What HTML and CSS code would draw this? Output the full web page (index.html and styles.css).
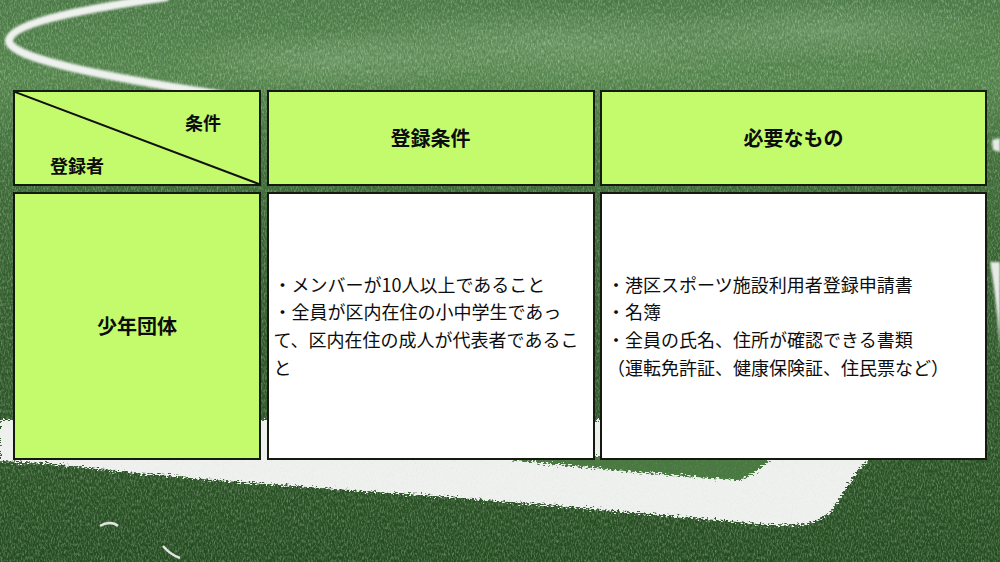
FILE: index.html
```html
<!DOCTYPE html>
<html lang="ja">
<head>
<meta charset="utf-8">
<title>登録条件</title>
<link rel="stylesheet" href="styles.css">
</head>
<body>
<div class="stage">
  <svg class="bg" width="1000" height="562" viewBox="0 0 1000 562" aria-hidden="true">
    <defs>
      <linearGradient id="base" x1="0" y1="0" x2="0" y2="1">
        <stop offset="0" stop-color="#4d7c47"/>
        <stop offset="0.14" stop-color="#58894f"/>
        <stop offset="0.3" stop-color="#3f6c37"/>
        <stop offset="0.6" stop-color="#30592a"/>
        <stop offset="1" stop-color="#244a1f"/>
      </linearGradient>
      <radialGradient id="patch" cx="0.5" cy="0.5" r="0.5">
        <stop offset="0" stop-color="#86ad7c" stop-opacity="0.55"/>
        <stop offset="1" stop-color="#86ad7c" stop-opacity="0"/>
      </radialGradient>
      <filter id="noise" x="0" y="0" width="100%" height="100%">
        <feTurbulence type="fractalNoise" baseFrequency="0.7 0.3" numOctaves="3" seed="7"/>
        <feColorMatrix type="matrix" values="0 0 0 0 0.8  0 0 0 0 0.92  0 0 0 0 0.78  1.8 0 0 0 -0.75"/>
      </filter>
      <filter id="dark" x="0" y="0" width="100%" height="100%">
        <feTurbulence type="fractalNoise" baseFrequency="0.5 0.2" numOctaves="2" seed="11"/>
        <feColorMatrix type="matrix" values="0 0 0 0 0.05  0 0 0 0 0.15  0 0 0 0 0.05  1.8 0 0 0 -0.7"/>
      </filter>
      <filter id="fuzz" x="-5%" y="-5%" width="110%" height="110%">
        <feTurbulence type="fractalNoise" baseFrequency="0.35 0.9" numOctaves="2" seed="3" result="t"/>
        <feDisplacementMap in="SourceGraphic" in2="t" scale="10" xChannelSelector="R" yChannelSelector="G" result="d"/>
        <feGaussianBlur in="d" stdDeviation="0.6"/>
      </filter>
      <filter id="soft"><feGaussianBlur stdDeviation="1.3"/></filter>
      <filter id="whitegrain" x="0" y="0" width="100%" height="100%">
        <feTurbulence type="fractalNoise" baseFrequency="0.9 0.4" numOctaves="2" seed="21"/>
        <feColorMatrix type="matrix" values="0 0 0 0 0.55  0 0 0 0 0.62  0 0 0 0 0.58  1.6 0 0 0 -0.8"/>
      </filter>
      <clipPath id="bandclip">
        <path d="M0,420 L 880,420 L 868,460 C 852,474 842,498 832,510 C 818,526 792,527 760,524 C 650,514 500,500 350,490 C 200,480 110,471 45,463 L 0,461 Z"/>
      </clipPath>
    </defs>
    <rect width="1000" height="562" fill="url(#base)"/>
    <ellipse cx="560" cy="45" rx="260" ry="40" fill="url(#patch)"/>
    <ellipse cx="830" cy="30" rx="170" ry="35" fill="url(#patch)"/>
    <ellipse cx="330" cy="60" rx="160" ry="30" fill="url(#patch)"/>
    <rect width="1000" height="562" filter="url(#noise)" opacity="0.45"/>
    <rect width="1000" height="562" filter="url(#dark)" opacity="0.5"/>

    <path d="M168,-3 C 90,8 12,22 9,40 C 6,58 110,78 225,95" fill="none" stroke="#eef1ee" stroke-width="8" filter="url(#soft)"/>

    <path d="M0,420 L 880,420 L 868,460 C 852,474 842,498 832,510 C 818,526 792,527 760,524 C 650,514 500,500 350,490 C 200,480 110,471 45,463 L 0,461 Z" fill="#eff1ef" filter="url(#fuzz)"/>
    <path d="M484,456 C 560,466 680,476 740,480 C 756,474 764,465 772,456 Z" fill="#4a7841" filter="url(#fuzz)"/>
    <rect width="1000" height="562" filter="url(#whitegrain)" opacity="0.3" clip-path="url(#bandclip)"/>

    <path d="M990,262 C 995,290 998,320 1000,352 L 1000,262 Z" fill="#e6ebe6" filter="url(#soft)"/>
    <path d="M992,140 L 1000,138 L 1000,152 L 993,150 Z" fill="#e6ebe6" filter="url(#soft)"/>
    <path d="M100,526 C 106,522 114,522 118,526" fill="none" stroke="#dfe5df" stroke-width="2.5"/>
    <path d="M163,546 C 168,552 174,556 180,558" fill="none" stroke="#dfe5df" stroke-width="2.5"/>
  </svg>

  <main class="content">
    <div class="grid">
      <div class="cell head corner">
        <svg class="diag" viewBox="0 0 100 100" preserveAspectRatio="none" aria-hidden="true">
          <line x1="0" y1="0" x2="100" y2="100" stroke="#111" stroke-width="2" vector-effect="non-scaling-stroke"/>
        </svg>
        <span class="cond">条件</span>
        <span class="who">登録者</span>
      </div>
      <div class="cell head title">登録条件</div>
      <div class="cell head title">必要なもの</div>

      <div class="cell head title">少年団体</div>
      <div class="cell text">
        <p>・メンバーが10人以上であること<br>・全員が区内在住の小中学生であって、区内在住の成人が代表者であること</p>
      </div>
      <div class="cell text">
        <p>・港区スポーツ施設利用者登録申請書<br>・名簿<br>・全員の氏名、住所が確認できる書類<br>（運転免許証、健康保険証、住民票など）</p>
      </div>
    </div>
  </main>
</div>
</body>
</html>
```

FILE: styles.css
```css
html, body {
  margin: 0;
  padding: 0;
}

body {
  width: 1000px;
  height: 562px;
  overflow: hidden;
  font-family: "Noto Sans CJK JP", "Noto Sans", sans-serif;
  color: #0d0d0d;
}

.stage {
  display: grid;
  width: 1000px;
  height: 562px;
}

.bg,
.content {
  grid-area: 1 / 1;
}

.bg {
  display: block;
}

.content {
  padding: 90px 0 0 13px;
  box-sizing: border-box;
}

.grid {
  display: grid;
  grid-template-columns: 248px 328px 387px;
  grid-template-rows: 96px 268px;
  column-gap: 5.5px;
  row-gap: 6px;
}

.cell {
  box-sizing: border-box;
  border: 2px solid #141a0f;
  display: flex;
}

.head {
  background: #c4fb6d;
  font-weight: 700;
}

.title {
  align-items: center;
  justify-content: center;
  font-size: 20px;
  line-height: 1.4;
}

.corner {
  position: relative;
  flex-direction: column;
  justify-content: space-between;
  padding: 18px 38px 6px 35px;
  font-size: 18px;
  line-height: 25px;
}

.diag {
  position: absolute;
  inset: 0;
  width: 100%;
  height: 100%;
}

.cond {
  align-self: flex-end;
}

.who {
  align-self: flex-start;
}

.text {
  background: #fff;
  align-items: center;
  padding: 0 5px;
  font-size: 18px;
  line-height: 27.6px;
}

.text p {
  margin: 0;
  line-break: strict;
}
```
